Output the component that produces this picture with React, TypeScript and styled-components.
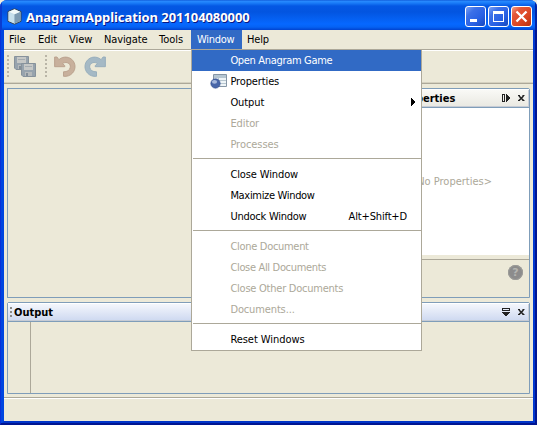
import React from 'react';
import styled, { createGlobalStyle, css } from 'styled-components';

const Global = createGlobalStyle`
  * { box-sizing: border-box; }
  html, body { margin: 0; padding: 0; overflow: hidden; }
  body { font: 11px/13px Tahoma, "DejaVu Sans Condensed", "DejaVu Sans", sans-serif; color: #000; background: #f0eee0; }
  svg { display: block; }
`;

const Frame = styled.div`
  width: 537px;
  height: 425px;
  display: flex;
  flex-direction: column;
  background: #0050e6;
  border-radius: 7px 7px 0 0;
  overflow: hidden;
`;

const TitleBar = styled.header`
  flex: none;
  height: 30px;
  display: flex;
  align-items: center;
  padding: 3px 5px 0 7px;
  background: linear-gradient(#0a4fd0 0, #2a8cff 1px, #1a7cf8 3px, #0458e4 6px, #0355e0 12px, #0560f2 19px, #0668ff 24px, #0562f4 27px, #0143cf 30px);
  box-shadow: inset 2px 0 #0a3cd0, inset -2px 0 #0024a8;
`;

const Title = styled.h1`
  flex: 1;
  margin: 0 0 0 4px;
  font: bold 13px/16px "Trebuchet MS", "Noto Sans", sans-serif;
  letter-spacing: -0.07px;
  color: #fff;
  text-shadow: 1px 1px #0a1883;
  white-space: nowrap;
`;

const Buttons = styled.div`
  display: flex;
  gap: 2px;
`;

const CaptionButton = styled.div<{ $close?: boolean }>`
  width: 21px;
  height: 21px;
  border: 1px solid #fff;
  border-radius: 3px;
  background: ${p => p.$close
    ? 'linear-gradient(135deg, #f0a088, #e4583a 25%, #da4420 65%, #b83210)'
    : 'linear-gradient(135deg, #7ba2f4, #3c70e8 28%, #2860e4 65%, #1648bd)'};
`;

const Client = styled.div`
  flex: 1;
  min-height: 0;
  display: flex;
  flex-direction: column;
  border-style: solid;
  border-width: 0 4px 4px;
  border-color: #0046dc #0038cf #0034c8 #0046e0;
  background: #ece9d8;
  position: relative;
  &::after {
    content: '';
    position: absolute;
    inset: 0 -4px -4px;
    border: solid #001590;
    border-width: 0 2px 2px 0;
    border-left: 1px solid #0831d9;
    pointer-events: none;
  }
`;

const MenuBar = styled.nav`
  flex: none;
  height: 21px;
  display: flex;
  border-bottom: 1px solid #fff;
  box-shadow: inset 0 -1px #aca899;
`;

const MenuTitle = styled.div<{ $w: number; $s?: number; $open?: boolean }>`
  position: relative;
  width: ${p => p.$w}px;
  height: 19px;
  padding: 3px 0 0 5px;
  letter-spacing: ${p => p.$s ?? 0}px;
  white-space: nowrap;
  ${p => p.$open && css`
    background: #316ac5;
    color: #fff;
    padding-left: 6px;
  `}
`;

const Popup = styled.div`
  position: absolute;
  z-index: 5;
  top: 19px;
  left: 0;
  width: 231px;
  height: 302px;
  border: 1px solid #aca899;
  background: #fff;
  color: #000;
`;

const Item = styled.div<{ $state?: 'active' | 'disabled'; $s?: number }>`
  height: 21px;
  display: flex;
  padding: 4px 8px 0 0;
  letter-spacing: ${p => p.$s ?? 0}px;
  background: ${p => (p.$state === 'active' ? '#316ac5' : 'transparent')};
  color: ${p => (p.$state === 'active' ? '#fff' : p.$state === 'disabled' ? '#aca899' : '#000')};
`;

const ItemIcon = styled.span`
  width: 38.4px;
  margin-top: -2px;
  padding-left: 18px;
`;

const ItemLabel = styled.span`
  flex: 1;
`;

const Shortcut = styled.span`
  margin-right: 6px;
  letter-spacing: -0.15px;
`;

const Arrow = styled.svg`
  margin: 2px -3px 0 0;
`;

const Separator = styled.div`
  height: 9px;
  padding: 3px 0 0 1px;
  &::before { content: ''; display: block; height: 1px; background: #aca899; }
`;

const ToolBar = styled.div`
  flex: none;
  height: 33px;
  display: flex;
  padding: 4px 0 0 3px;
  border-bottom: 1px solid #aca899;
  box-shadow: inset 0 -1px #d5d1c0;
`;

const Grip = styled.div`
  width: 2px;
  height: 24px;
  background: repeating-linear-gradient(#b9b5a7 0 2px, transparent 2px 4px);
`;

const Tool = styled.div<{ $gap: number }>`
  margin-left: ${p => p.$gap}px;
`;

const Workspace = styled.main`
  flex: none;
  height: 313px;
  display: flex;
  flex-direction: column;
  gap: 4px;
  padding: 4px 3px 3px;
`;

const Upper = styled.div`
  height: 210px;
  display: flex;
  gap: 4px;
`;

const Editor = styled.section`
  flex: 1;
  border: 1px solid #7f9db9;
`;

const Panel = styled.section<{ $w?: number; $h: number }>`
  width: ${p => (p.$w ? `${p.$w}px` : 'auto')};
  height: ${p => p.$h}px;
  display: flex;
  flex-direction: column;
  border: 1px solid #7f9db9;
  border-radius: 2px 2px 0 0;
`;

const PanelHeader = styled.header<{ $active?: boolean }>`
  flex: none;
  height: 19px;
  display: flex;
  align-items: center;
  padding: 0 4px 0 2px;
  border-bottom: 1px solid #7f9db9;
  box-shadow: inset 0 1px #fff, inset 0 -1px #c6cbd4, inset -1px 0 #c9ced8;
  background: ${p => (p.$active ? 'linear-gradient(#f6f8fd, #cdd8f0)' : 'linear-gradient(#fafaf7, #e9e8e1)')};
`;

const PanelTitle = styled.h2`
  flex: 1;
  margin: 0 0 0 2px;
  font: bold 11px/13px Tahoma, "DejaVu Sans Condensed", sans-serif;
`;

const HeaderIcons = styled.div`
  display: flex;
  align-items: center;
  gap: 7px;
`;

const Sheet = styled.div`
  flex: none;
  height: 147px;
  padding: 67px 37px 0 0;
  background: #fff;
  color: #aca899;
  text-align: right;
`;

const Help = styled.div`
  flex: 1;
  display: flex;
  justify-content: flex-end;
  align-items: flex-start;
  margin-top: 4px;
  padding: 5px 6px 0 0;
  border-top: 1px solid #aca899;
`;

const OutputBody = styled.div`
  flex: 1;
  width: 23px;
  border-right: 1px solid #aca899;
`;

const Status = styled.footer`
  flex: 1;
  border-top: 1px solid #aca899;
  box-shadow: inset 0 1px #fff;
`;

const AppIcon = () => (
  <svg width="15" height="17" viewBox="0 0 15 17">
    <path d="M7.5 .8 14 3.5v9.8L7.5 16.2 1 13.3V3.5Z" fill="#b7d1e0" stroke="#344353" />
    <path d="M1.5 3.7 7.5 6.3V15.6L1.5 13Z" fill="#c7e0ec" />
    <path d="M13.5 3.7 7.5 6.3V15.6L13.5 13Z" fill="#7d9bb2" />
    <path d="m1.8 3.7 5.7-2.4 5.7 2.4-5.7 2.5Z" fill="#f3fafa" />
  </svg>
);

const Disk = ({ x, y }: { x: number; y: number }) => (
  <g transform={`translate(${x} ${y})`}>
    <path d="M.5.5h14v13H2l-1.5-1.5Z" fill="#97a3ad" stroke="#87929b" />
    <path d="M3 1h9v6H3Z" fill="#c6c8c6" />
    <path d="M4 3.5h7" stroke="#a4abb0" />
    <path d="M4 9h7v4H4Z" fill="#b5b9ba" />
    <path d="M5 10h2v3H5Z" fill="#838e98" />
  </g>
);

const SaveAllIcon = () => (
  <svg width="23" height="23" viewBox="0 0 23 23">
    <Disk x={0} y={1} />
    <Disk x={7} y={8} />
  </svg>
);

const UndoIcon = ({ fill, stroke }: { fill: string; stroke: string }) => (
  <svg width="22" height="23" viewBox="0 0 22 23">
    <path d="M.6 2H3l1.900 2.700C8 1.800 12.500 1.400 16 3.200c5.600 3 6.600 10.300 2.600 14.800-2.300 2.600-5.600 3.700-9.100 3.300v-4.500c3.600.1 6.300-1.400 6.800-4.600.4-3.100-2.500-5.200-5.500-4.600-.9.200-1.600.5-2.200 1l2.200 2.100v1H.6Z" fill={fill} stroke={stroke} strokeWidth=".9" />
  </svg>
);

const Flip = styled.div`
  transform: scaleX(-1);
`;

const PropertiesIcon = () => (
  <svg width="17" height="16" viewBox="0 0 17 16">
    <path d="M3.5 1.5h13v12h-13Z" fill="#eef4f7" stroke="#8595a5" />
    <path d="M4 2h12v2H4Z" fill="#b5c6d2" />
    <path d="M4 4.5h12M4 7.5h12M4 10.5h12M8.5 4v9" stroke="#b6c5cf" />
    <circle cx="5.5" cy="10.5" r="4.7" fill="#4866a8" stroke="#304d8d" strokeWidth=".6" />
    <ellipse cx="4.5" cy="8.8" rx="2.6" ry="1.9" fill="#a5b8dd" />
  </svg>
);

const CloseIcon = () => (
  <svg width="7" height="7" viewBox="0 0 7 7">
    <path d="M1 1 5.5 5.5M5.5 1 1 5.5" stroke="#222" strokeWidth="1.6" />
    <path d="M0 .5h2M4.5 .5h2M0 5.5h2M4.5 5.5h2" stroke="#222" />
  </svg>
);

const SlideIcon = () => (
  <svg width="9" height="8" viewBox="0 0 9 8" shapeRendering="crispEdges">
    <path d="M.5.5h2v7h-2Z" fill="none" stroke="#222" />
    <path d="M4 0h1v1h1v1h1v1h1v2H7v1H6v1H5v1H4Z" fill="#222" />
  </svg>
);

const DockDownIcon = () => (
  <svg width="9" height="8" viewBox="0 0 9 8" shapeRendering="crispEdges">
    <path d="M.5.5h7v2h-7Z" fill="none" stroke="#222" />
    <path d="M0 4h8v1H7v1H6v1H5v1H3V7H2V6H1V5H0Z" fill="#222" />
  </svg>
);

const PanelGrip = () => (
  <svg width="2" height="10" viewBox="0 0 2 10">
    <path d="M0 0h2v2H0ZM0 4h2v2H0ZM0 8h2v2H0Z" fill="#8c8b86" />
  </svg>
);

const HelpIcon = styled.div`
  width: 15px;
  height: 15px;
  border-radius: 50%;
  background: #8c8c8c;
  box-shadow: inset 0 0 0 1px #9c9c98;
  color: #b4b4b0;
  font: bold 11px/15px "DejaVu Sans", sans-serif;
  text-align: center;
`;

type Entry = { label: string; s?: number; state?: 'active' | 'disabled'; icon?: boolean; arrow?: boolean; keys?: string } | null;

const entries: Entry[] = [
  { label: 'Open Anagram Game', s: -0.32, state: 'active' },
  { label: 'Properties', s: -0.12, icon: true },
  { label: 'Output', s: -0.08, arrow: true },
  { label: 'Editor', s: -0.1, state: 'disabled' },
  { label: 'Processes', s: -0.05, state: 'disabled' },
  null,
  { label: 'Close Window', s: -0.12 },
  { label: 'Maximize Window', s: -0.32 },
  { label: 'Undock Window', s: -0.24, keys: 'Alt+Shift+D' },
  null,
  { label: 'Clone Document', s: -0.3, state: 'disabled' },
  { label: 'Close All Documents', s: -0.33, state: 'disabled' },
  { label: 'Close Other Documents', s: -0.24, state: 'disabled' },
  { label: 'Documents...', s: -0.13, state: 'disabled' },
  null,
  { label: 'Reset Windows', s: -0.05 },
];

const WindowMenu = () => (
  <Popup>
    {entries.map((e, i) => e === null ? <Separator key={i} /> : (
      <Item key={i} $state={e.state} $s={e.s}>
        <ItemIcon>{e.icon && <PropertiesIcon />}</ItemIcon>
        <ItemLabel>{e.label}</ItemLabel>
        {e.keys && <Shortcut>{e.keys}</Shortcut>}
        {e.arrow && (
          <Arrow width="5" height="8" viewBox="0 0 5 8" shapeRendering="crispEdges">
            <path d="M0 0h1v1h1v1h1v1h1v2H3v1H2v1H1v1H0Z" fill="#000" />
          </Arrow>
        )}
      </Item>
    ))}
  </Popup>
);

export default function App() {
  return (
    <>
      <Global />
      <Frame>
        <TitleBar>
          <AppIcon />
          <Title>AnagramApplication 201104080000</Title>
          <Buttons>
            <CaptionButton>
              <svg width="19" height="19"><path d="M4 12h7v3H4Z" fill="#fff" /></svg>
            </CaptionButton>
            <CaptionButton>
              <svg width="19" height="19"><path d="M4 4h11v11H4ZM5 7v7h9V7Z" fill="#fff" fillRule="evenodd" /></svg>
            </CaptionButton>
            <CaptionButton $close>
              <svg width="19" height="19"><path d="m4.5 4.5 10 10M14.5 4.5l-10 10" stroke="#fff" strokeWidth="2.3" /></svg>
            </CaptionButton>
          </Buttons>
        </TitleBar>
        <Client>
          <MenuBar>
            <MenuTitle $w={29}>File</MenuTitle>
            <MenuTitle $w={31}>Edit</MenuTitle>
            <MenuTitle $w={35}>View</MenuTitle>
            <MenuTitle $w={55} $s={-0.12}>Navigate</MenuTitle>
            <MenuTitle $w={37}>Tools</MenuTitle>
            <MenuTitle $w={51} $s={-0.3} $open>Window<WindowMenu /></MenuTitle>
            <MenuTitle $w={34} $s={-0.15}>Help</MenuTitle>
          </MenuBar>
          <ToolBar>
            <Grip />
            <Tool $gap={5}><SaveAllIcon /></Tool>
            <Tool $gap={8}><Grip /></Tool>
            <Tool $gap={7}><UndoIcon fill="#c8b09c" stroke="#b89f8b" /></Tool>
            <Tool $gap={8}><Flip><UndoIcon fill="#a5b9c5" stroke="#94abba" /></Flip></Tool>
          </ToolBar>
          <Workspace>
            <Upper>
              <Editor />
              <Panel $w={140} $h={210}>
                <PanelHeader>
                  <PanelGrip />
                  <PanelTitle>Properties</PanelTitle>
                  <HeaderIcons><SlideIcon /><CloseIcon /></HeaderIcons>
                </PanelHeader>
                <Sheet>&lt;No Properties&gt;</Sheet>
                <Help><HelpIcon>?</HelpIcon></Help>
              </Panel>
            </Upper>
            <Panel $h={92}>
              <PanelHeader $active>
                <PanelGrip />
                <PanelTitle>Output</PanelTitle>
                <HeaderIcons><DockDownIcon /><CloseIcon /></HeaderIcons>
              </PanelHeader>
              <OutputBody />
            </Panel>
          </Workspace>
          <Status />
        </Client>
      </Frame>
    </>
  );
}
